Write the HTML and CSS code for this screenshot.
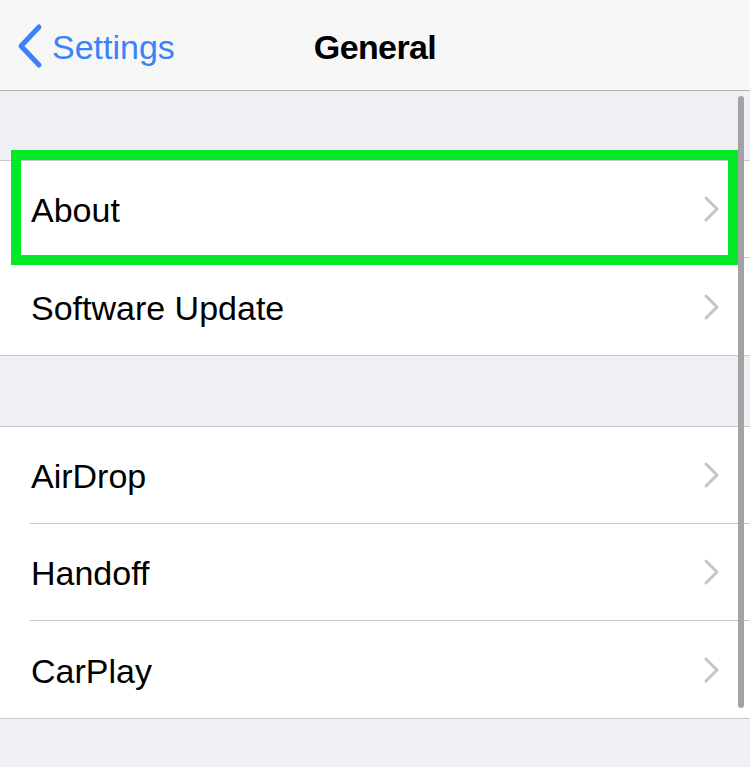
FILE: index.html
```html
<!DOCTYPE html>
<html>
<head>
<meta charset="utf-8">
<link rel="stylesheet" href="styles.css">
</head>
<body>
<div class="screen">
  <header class="nav">
    <div class="back">
      <svg class="back-chev" width="28" height="46" viewBox="0 0 28 46"><path d="M23 4 L5 23 L23 42" fill="none" stroke="#3a82f7" stroke-width="5" stroke-linecap="round" stroke-linejoin="round"/></svg>
      <span class="back-label">Settings</span>
    </div>
    <div class="title">General</div>
  </header>
  <main class="content">
    <section class="group first">
      <div class="row"><span class="label">About</span><svg class="chev" width="18" height="28" viewBox="0 0 18 28"><path d="M3 3 L14 14 L3 25" fill="none" stroke="#c4c4c9" stroke-width="3" stroke-linecap="round" stroke-linejoin="round"/></svg></div>
      <div class="row"><span class="label">Software Update</span><svg class="chev" width="18" height="28" viewBox="0 0 18 28"><path d="M3 3 L14 14 L3 25" fill="none" stroke="#c4c4c9" stroke-width="3" stroke-linecap="round" stroke-linejoin="round"/></svg></div>
    </section>
    <section class="group second">
      <div class="row"><span class="label">AirDrop</span><svg class="chev" width="18" height="28" viewBox="0 0 18 28"><path d="M3 3 L14 14 L3 25" fill="none" stroke="#c4c4c9" stroke-width="3" stroke-linecap="round" stroke-linejoin="round"/></svg></div>
      <div class="row"><span class="label">Handoff</span><svg class="chev" width="18" height="28" viewBox="0 0 18 28"><path d="M3 3 L14 14 L3 25" fill="none" stroke="#c4c4c9" stroke-width="3" stroke-linecap="round" stroke-linejoin="round"/></svg></div>
      <div class="row"><span class="label">CarPlay</span><svg class="chev" width="18" height="28" viewBox="0 0 18 28"><path d="M3 3 L14 14 L3 25" fill="none" stroke="#c4c4c9" stroke-width="3" stroke-linecap="round" stroke-linejoin="round"/></svg></div>
    </section>
  </main>
  <div class="highlight"></div>
  <div class="scrollbar"></div>
</div>
</body>
</html>
```
FILE: styles.css
```css
html, body {
  margin: 0;
  padding: 0;
  background: #efeff4;
}
body {
  font-family: "Liberation Sans", Arial, sans-serif;
  color: #000;
}
.screen {
  position: relative;
  width: 750px;
  height: 767px;
  overflow: hidden;
  background: #efeff4;
}
.nav {
  position: relative;
  height: 90px;
  background: #f7f7f8;
  border-bottom: 1px solid #b4b4b8;
  display: flex;
  align-items: center;
  justify-content: center;
  box-sizing: content-box;
}
.back {
  position: absolute;
  left: 16px;
  top: 0;
  height: 90px;
  display: flex;
  align-items: center;
}
.back-chev {
  display: block;
  margin-top: 2px;
}
.back-label {
  font-size: 34px;
  color: #3a82f7;
  margin-left: 8px;
  padding-top: 4px;
}
.title {
  font-size: 34px;
  font-weight: bold;
  letter-spacing: -0.6px;
  padding-top: 4px;
  margin-left: 0px;
}
.content {
  display: flex;
  flex-direction: column;
}
.group {
  background: #fff;
  border-top: 1px solid #c8c7cc;
  border-bottom: 1px solid #c8c7cc;
}
.group.first {
  margin-top: 69px;
}
.group.second {
  margin-top: 70px;
}
.row {
  height: 96px;
  display: flex;
  align-items: center;
  justify-content: space-between;
  margin-left: 30px;
  padding-right: 29px;
  border-bottom: 1px solid #c8c7cc;
}
.row:last-child {
  border-bottom: none;
  height: 97px;
}
.label {
  font-size: 34px;
  padding-top: 3px;
  padding-left: 1px;
}
.chev {
  display: block;
}
.highlight {
  position: absolute;
  left: 11px;
  top: 150px;
  width: 707px;
  height: 95px;
  border: 10px solid #03e928;
}
.scrollbar {
  position: absolute;
  left: 738px;
  top: 96px;
  width: 6px;
  height: 612px;
  border-radius: 3px;
  background: #a3a3a6;
}
```
